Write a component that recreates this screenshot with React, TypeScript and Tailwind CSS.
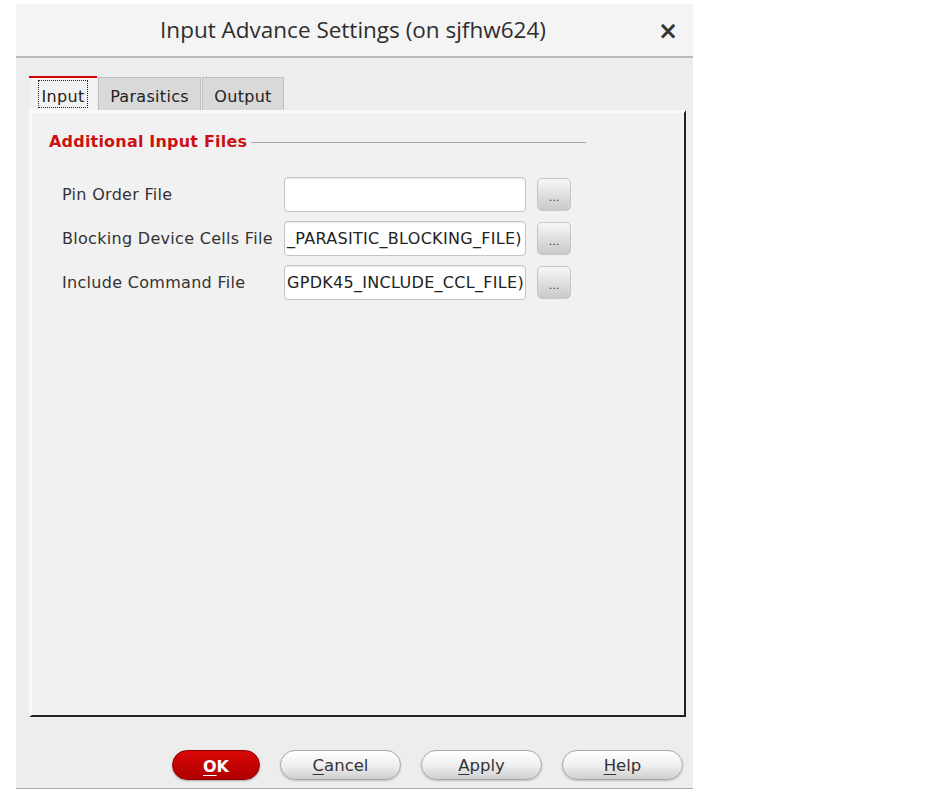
import React from "react";

const ui = "font-['DejaVu_Sans','Liberation_Sans',sans-serif]";

function Field({ label, value }: { label: string; value: string }) {
  return (
    <div className="flex items-center h-[35px]">
      <div className="w-[222px] text-[16px] tracking-[0.3px] text-[#333] whitespace-nowrap">{label}</div>
      <div className="w-[242px] h-[35px] rounded-[4px] border border-[#c4c4c4] bg-white flex items-center pl-[2px] overflow-hidden text-[16px] tracking-[0.3px] text-[#222] whitespace-nowrap shadow-[inset_0_1px_1px_rgba(0,0,0,0.08)]">
        {value}
      </div>
      <button className="ml-[11px] w-[34px] h-[33px] rounded-[5px] border border-[#c6c6c6] bg-gradient-to-b from-[#f7f7f7] to-[#c9c9c9] text-[11px] leading-none text-[#333] pt-[6px]">
        ...
      </button>
    </div>
  );
}

function Btn({ u, rest, primary }: { u: string; rest: string; primary?: boolean }) {
  if (primary) {
    return (
      <button className="w-[88px] h-[30px] rounded-full border border-[#8a0000] bg-gradient-to-b from-[#d80808] to-[#b00000] text-white font-bold text-[16px] pt-[3px] shadow-[0_1px_2px_rgba(0,0,0,0.3)]">
        <span className="underline underline-offset-[3px]">{u}</span>
        {rest}
      </button>
    );
  }
  return (
    <button className="w-[121px] h-[30px] rounded-full border border-[#a8a8a8] bg-gradient-to-b from-[#ffffff] via-[#f0f0f0] to-[#cfcfcf] text-[#333] text-[16.5px] pt-[3px] shadow-[0_1px_2px_rgba(0,0,0,0.2)]">
      <span className="underline underline-offset-[3px]">{u}</span>
      {rest}
    </button>
  );
}

export default function App() {
  return (
    <div className={`w-[944px] h-[798px] bg-white ${ui}`}>
      <div className="ml-[16px] pt-[4px] w-[677px]">
        <div className="h-[785px] bg-[#ededed] border-b border-[#a9a9a9] flex flex-col">
          {/* title bar */}
          <div className="h-[54px] bg-[#f4f4f4] border-b-2 border-[#b9b9b9] flex items-center justify-center relative shrink-0">
            <span className="font-['Open_Sans','DejaVu_Sans',sans-serif] text-[22.5px] text-[#2e2e2e] -ml-[3px]">
              Input Advance Settings (on sjfhw624)
            </span>
            <span className="absolute right-[15px] top-[9px] text-[24px] font-bold text-[#333]">×</span>
          </div>

          <div className="flex-1 flex flex-col px-[13px] pt-[18px]">
            {/* tabs */}
            <div className="flex items-end h-[34px] text-[16px] tracking-[0.3px] text-[#222]">
              <div className="w-[68px] h-[34px] border-t-2 border-[#d40000] bg-[#f2f2f2] flex items-start justify-center pt-[2px]">
                <span className="border border-dotted border-[#222] px-[3px] h-[28px] flex items-center pt-[5px]">Input</span>
              </div>
              <div className="ml-[1px] w-[103px] h-[33px] bg-[#d9d9d9] border border-b-0 border-[#bdbdbd] flex items-center justify-center pt-[5px]">
                Parasitics
              </div>
              <div className="ml-[1px] w-[82px] h-[33px] bg-[#d9d9d9] border border-b-0 border-[#bdbdbd] flex items-center justify-center pt-[5px]">
                Output
              </div>
            </div>

            {/* panel */}
            <div className="h-[607px] w-[657px] bg-[#f1f1f1] border-l-[3px] border-t-[3px] border-[#f9f9f9] border-r-2 border-b-2 border-r-[#222] border-b-[#222] pl-[17px] pt-[19px]">
              <div className="flex items-center h-[20px]">
                <span className="text-[16px] font-bold text-[#cc1111] tracking-[0.2px]">Additional Input Files</span>
                <div className="ml-[4px] w-[335px] h-px bg-[#a8a8a8]" />
              </div>
              <div className="mt-[25px] pl-[13px] flex flex-col gap-[9px]">
                <Field label="Pin Order File" value="" />
                <Field label="Blocking Device Cells File" value="_PARASITIC_BLOCKING_FILE)" />
                <Field label="Include Command File" value="GPDK45_INCLUDE_CCL_FILE)" />
              </div>
            </div>

            {/* buttons */}
            <div className="flex justify-end gap-[20px] mt-[33px] mr-[-3px]">
              <Btn u="O" rest="K" primary />
              <Btn u="C" rest="ancel" />
              <Btn u="A" rest="pply" />
              <Btn u="H" rest="elp" />
            </div>
          </div>
        </div>
      </div>
    </div>
  );
}
